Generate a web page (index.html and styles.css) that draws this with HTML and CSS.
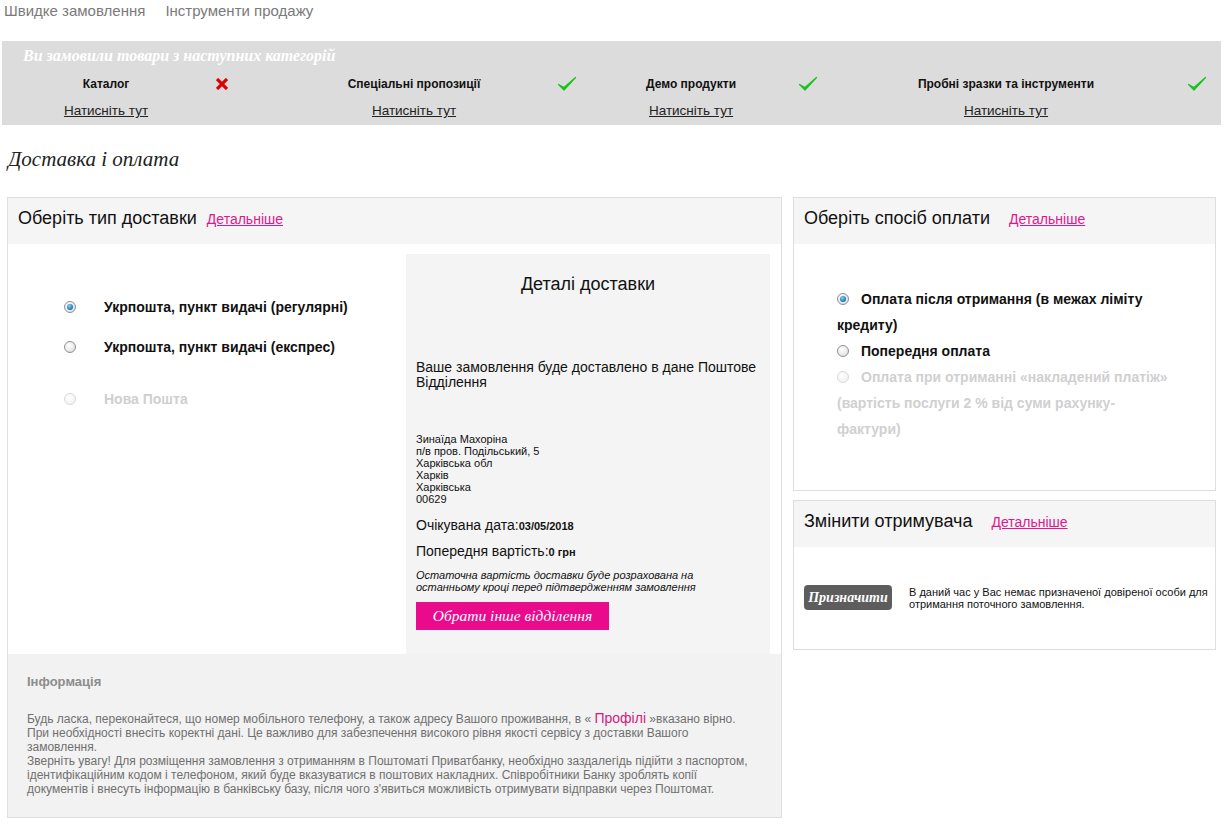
FILE: index.html
```html
<!DOCTYPE html>
<html lang="uk">
<head>
<meta charset="utf-8">
<title>Доставка і оплата</title>
<link rel="stylesheet" href="styles.css">
</head>
<body>
<nav class="topnav">
  <a class="topnav-link" href="#">Швидке замовлення</a>
  <a class="topnav-link" href="#">Інструменти продажу</a>
</nav>

<section class="catbar">
  <div class="catbar-title">Ви замовили товари з наступних категорій</div>
  <div class="cats">
    <div class="cat-name">Каталог</div>
    <div class="cat-icon"><svg width="12" height="12" viewBox="0 0 12 12"><path d="M1 1 L11 11 M11 1 L1 11" stroke="#e10000" stroke-width="3.2" stroke-linecap="butt"/></svg></div>
    <div class="cat-name cat-name-2">Спеціальні пропозиції</div>
    <div class="cat-icon"><svg class="check" width="20" height="16" viewBox="0 0 20 16"><path d="M1.5 8.5 L7 14 L18.5 1.5 L7 11.5 Z" fill="#19c41c" stroke="#19c41c" stroke-width="1.2" stroke-linejoin="round"/></svg></div>
    <div class="cat-name cat-name-3">Демо продукти</div>
    <div class="cat-icon"><svg class="check" width="20" height="16" viewBox="0 0 20 16"><path d="M1.5 8.5 L7 14 L18.5 1.5 L7 11.5 Z" fill="#19c41c" stroke="#19c41c" stroke-width="1.2" stroke-linejoin="round"/></svg></div>
    <div class="cat-name cat-name-4">Пробні зразки та інструменти</div>
    <div class="cat-icon"><svg class="check" width="20" height="16" viewBox="0 0 20 16"><path d="M1.5 8.5 L7 14 L18.5 1.5 L7 11.5 Z" fill="#19c41c" stroke="#19c41c" stroke-width="1.2" stroke-linejoin="round"/></svg></div>

    <div class="cat-link"><a href="#">Натисніть тут</a></div>
    <div></div>
    <div class="cat-link cat-name-2"><a href="#">Натисніть тут</a></div>
    <div></div>
    <div class="cat-link cat-name-3"><a href="#">Натисніть тут</a></div>
    <div></div>
    <div class="cat-link cat-name-4"><a href="#">Натисніть тут</a></div>
    <div></div>
  </div>
</section>

<h1 class="page-title">Доставка і оплата</h1>

<div class="layout">
  <section class="panel panel-delivery">
    <header class="panel-head">
      <span class="panel-title">Оберіть тип доставки</span>
      <a class="more" href="#">Детальніше</a>
    </header>
    <div class="delivery-body">
      <div class="delivery-options">
        <div class="opt"><span class="radio checked"></span><span class="opt-label">Укрпошта, пункт видачі (регулярні)</span></div>
        <div class="opt"><span class="radio"></span><span class="opt-label">Укрпошта, пункт видачі (експрес)</span></div>
        <div class="opt opt-disabled"><span class="radio disabled"></span><span class="opt-label">Нова Пошта</span></div>
      </div>
      <div class="details">
        <div class="details-title">Деталі доставки</div>
        <p class="details-text">Ваше замовлення буде доставлено в дане Поштове Відділення</p>
        <address class="details-address">Зинаїда Махоріна<br>п/в пров. Подільський, 5<br>Харківська обл<br>Харків<br>Харківська<br>00629</address>
        <div class="details-line details-date">Очікувана дата:<b>03/05/2018</b></div>
        <div class="details-line details-cost">Попередня вартість:<b>0 грн</b></div>
        <p class="details-note">Остаточна вартість доставки буде розрахована на останньому кроці перед підтвердженням замовлення</p>
        <button class="btn-pink" type="button">Обрати інше відділення</button>
      </div>
    </div>
    <div class="info">
      <div class="info-title">Інформація</div>
      <p class="info-text">Будь ласка, переконайтеся, що номер мобільного телефону, а також адресу Вашого проживання, в « <a class="info-link" href="#">Профілі</a> »вказано вірно.<br>При необхідності внесіть коректні дані. Це важливо для забезпечення високого рівня якості сервісу з доставки Вашого<br>замовлення.<br>Зверніть увагу! Для розміщення замовлення з отриманням в Поштоматі Приватбанку, необхідно заздалегідь підійти з паспортом,<br>ідентифікаційним кодом і телефоном, який буде вказуватися в поштових накладних. Співробітники Банку зроблять копії<br>документів і внесуть інформацію в банківську базу, після чого з'явиться можливість отримувати відправки через Поштомат.</p>
    </div>
  </section>

  <div class="side">
    <section class="panel panel-payment">
      <header class="panel-head">
        <span class="panel-title">Оберіть спосіб оплати</span>
        <a class="more more-wide" href="#">Детальніше</a>
      </header>
      <div class="payment-body">
        <div class="pay-opt"><span class="radio checked"></span>Оплата після отримання (в межах ліміту кредиту)</div>
        <div class="pay-opt"><span class="radio"></span>Попередня оплата</div>
        <div class="pay-opt pay-disabled"><span class="radio disabled"></span>Оплата при отриманні «накладений платіж» (вартість послуги 2 % від суми рахунку-<br>фактури)</div>
      </div>
    </section>

    <section class="panel panel-recipient">
      <header class="panel-head">
        <span class="panel-title">Змінити отримувача</span>
        <a class="more more-wide" href="#">Детальніше</a>
      </header>
      <div class="recipient-body">
        <button class="btn-gray" type="button">Призначити</button>
        <p class="recipient-text">В даний час у Вас немає призначеної довіреної особи для отримання поточного замовлення.</p>
      </div>
    </section>
  </div>
</div>
</body>
</html>
```

FILE: styles.css
```css
* { box-sizing: border-box; }

body {
  margin: 0;
  padding: 0 2px;
  background: #fff;
  font-family: "Liberation Sans", Arial, sans-serif;
  color: #000;
}

/* top nav */
.topnav {
  display: flex;
  gap: 20px;
  height: 41px;
  padding-left: 2px;
  line-height: 22px;
}
.topnav-link {
  font-size: 15px;
  color: #7a7a7a;
  text-decoration: none;
}

/* categories bar */
.catbar {
  background: #dcdcdc;
  width: 1219px;
  padding: 5px 0 5px;
}
.catbar-title {
  padding-left: 21px;
  font-family: "Liberation Serif", "Times New Roman", serif;
  font-style: italic;
  font-weight: bold;
  font-size: 16px;
  line-height: 20px;
  color: #fff;
  margin-bottom: 9px;
}
.cats {
  display: grid;
  grid-template-columns: 208px 24px 321px 24px 217px 24px 365px 24px;
  grid-template-rows: 18px 18px;
  row-gap: 9px;
}
.cat-name {
  text-align: center;
  font-size: 12px;
  font-weight: bold;
  line-height: 18px;
  color: #111;
}
.cat-name-2 { padding-left: 39px; }
.cat-name-3 { padding-left: 7px; }
.cat-name-4 { padding-left: 10px; padding-right: 3px; }
.cat-icon {
  display: flex;
  align-items: center;
  justify-content: center;
}
.cat-link {
  text-align: center;
  line-height: 18px;
  font-size: 13.5px;
}
.cat-link a { color: #222; text-decoration: underline; }

/* page title */
.page-title {
  margin: 21px 0 0 6px;
  font-family: "Liberation Serif", "Times New Roman", serif;
  font-style: italic;
  font-weight: normal;
  font-size: 21px;
  line-height: 26px;
  color: #222;
  height: 51px;
}

/* layout */
.layout {
  display: flex;
  align-items: flex-start;
  gap: 11px;
  padding-left: 5px;
}
.panel {
  border: 1px solid #dedede;
  background: #fff;
}
.panel-delivery { width: 775px; }
.side {
  width: 423px;
  display: flex;
  flex-direction: column;
  gap: 9px;
}
.panel-head {
  background: #f5f5f5;
  height: 46px;
  display: flex;
  align-items: center;
  padding: 0 0 5px 10px;
}
.panel-title {
  font-size: 18px;
  color: #111;
}
.more {
  margin-left: 10px;
  font-size: 14px;
  color: #e2178c;
  text-decoration: underline;
}
.more-wide { margin-left: 19px; }

/* delivery body */
.delivery-body {
  display: flex;
}
.delivery-options {
  flex: 1;
  padding: 53px 0 0 56px;
}
.opt {
  display: flex;
  align-items: center;
  height: 20px;
  margin-bottom: 20px;
}
.opt-disabled { margin-top: 32px; }
.opt .radio { margin-right: 28px; }
.opt-label {
  font-size: 14px;
  font-weight: bold;
  color: #111;
}
.opt-disabled .opt-label { color: #cfcfcf; }

.radio {
  display: inline-block;
  position: relative;
  width: 12px;
  height: 12px;
  border-radius: 50%;
  border: 1px solid #8f9194;
  background: radial-gradient(circle at 40% 35%, #ffffff 0%, #e8e8e8 60%, #cfcfcf 100%);
  flex: none;
}
.radio.checked::after {
  content: "";
  position: absolute;
  left: 2px;
  top: 2px;
  width: 6px;
  height: 6px;
  border-radius: 50%;
  background: radial-gradient(circle at 40% 35%, #8ad4f7 0%, #2a8cc8 50%, #0b4f80 100%);
}
.radio.disabled {
  border-color: #dadada;
  background: radial-gradient(circle at 40% 35%, #ffffff 0%, #f2f2f2 70%, #e6e6e6 100%);
}

/* details box */
.details {
  width: 364px;
  margin: 10px 11px 0 0;
  background: #f4f4f4;
  padding: 20px 10px 24px 10px;
}
.details-title {
  text-align: center;
  font-size: 18px;
  line-height: 20px;
  color: #111;
}
.details-text {
  margin: 66px 0 0;
  font-size: 14px;
  line-height: 15px;
  color: #111;
}
.details-address {
  margin-top: 43px;
  font-style: normal;
  font-size: 11px;
  line-height: 12px;
  color: #111;
}
.details-line {
  font-size: 14px;
  line-height: 18px;
  color: #111;
}
.details-line b { font-size: 11px; }
.details-date { margin-top: 11px; }
.details-cost { margin-top: 7px; }
.details-note {
  margin: 8px 0 0;
  font-size: 11px;
  line-height: 12px;
  font-style: italic;
  color: #111;
}
.btn-pink {
  display: block;
  margin-top: 9px;
  width: 193px;
  height: 28px;
  border: 0;
  padding: 0;
  background: #ea0a8c;
  color: #fff;
  font-family: "Liberation Serif", "Times New Roman", serif;
  font-style: italic;
  font-size: 15.5px;
}

/* info */
.info {
  background: #f2f2f2;
  padding: 20px 4px 21px 19px;
}
.info-title {
  font-size: 13px;
  font-weight: bold;
  line-height: 16px;
  color: #8c8c8c;
}
.info-text {
  margin: 21px 0 0;
  font-size: 12px;
  line-height: 14px;
  color: #707070;
  white-space: nowrap;
}
.info-link {
  color: #d1207f;
  font-size: 14px;
  line-height: 14px;
  text-decoration: none;
}

/* payment */
.payment-body {
  padding: 42px 40px 48px 43px;
}
.pay-opt {
  font-size: 14px;
  font-weight: bold;
  line-height: 26px;
  color: #111;
}
.pay-opt .radio {
  vertical-align: -1px;
  margin-right: 12px;
}
.pay-disabled { color: #d0d0d0; }

/* recipient */
.recipient-body {
  display: flex;
  align-items: center;
  padding: 38px 4px 39px 10px;
}
.btn-gray {
  flex: none;
  width: 88px;
  height: 25px;
  border: 0;
  border-radius: 4px;
  padding: 0;
  background: #5d5d5d;
  color: #fff;
  font-family: "Liberation Serif", "Times New Roman", serif;
  font-style: italic;
  font-weight: bold;
  font-size: 14px;
}
.recipient-text {
  margin: 0 0 0 17px;
  font-size: 11px;
  line-height: 12px;
  color: #111;
}
```
